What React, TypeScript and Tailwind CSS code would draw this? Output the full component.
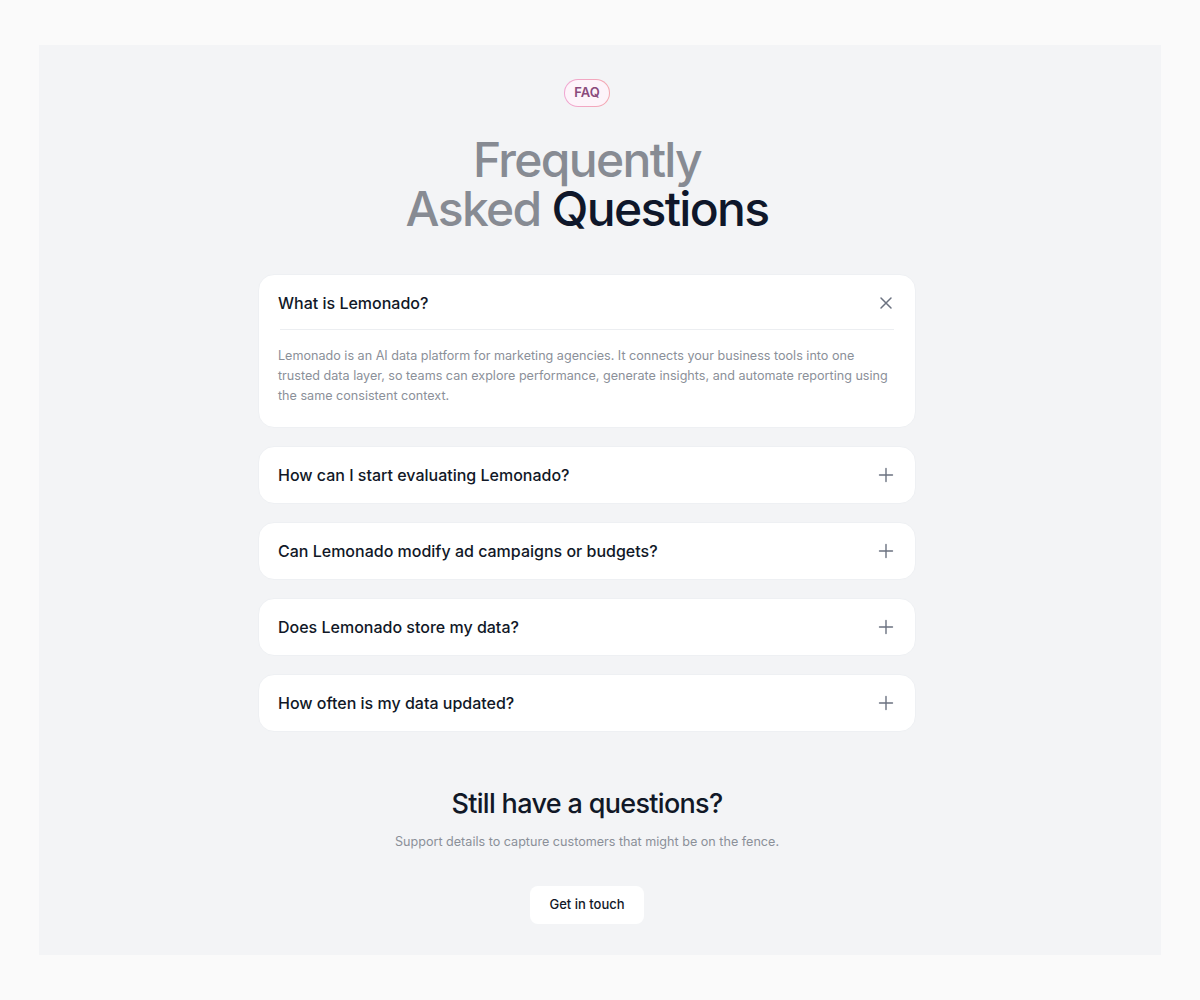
import React, { useState } from 'react';

interface FaqItem {
  question: string;
  answer: string;
}

const faqs: FaqItem[] = [
  {
    question: 'What is Lemonado?',
    answer:
      'Lemonado is an AI data platform for marketing agencies. It connects your business tools into one trusted data layer, so teams can explore performance, generate insights, and automate reporting using the same consistent context.',
  },
  {
    question: 'How can I start evaluating Lemonado?',
    answer: 'Sign up for a free trial and connect your first data source in a few minutes.',
  },
  {
    question: 'Can Lemonado modify ad campaigns or budgets?',
    answer: 'No. Lemonado has read-only access to your connected platforms.',
  },
  {
    question: 'Does Lemonado store my data?',
    answer: 'Your data is stored securely in an isolated workspace that only your team can access.',
  },
  {
    question: 'How often is my data updated?',
    answer: 'Data is synced automatically on a schedule you control.',
  },
];

const PlusIcon = () => (
  <svg width="16" height="16" viewBox="0 0 16 16" fill="none" stroke="#6b7280" strokeWidth="1.4" strokeLinecap="round">
    <path d="M8 1.5v13M1.5 8h13" />
  </svg>
);

const CloseIcon = () => (
  <svg width="16" height="16" viewBox="0 0 16 16" fill="none" stroke="#6b7280" strokeWidth="1.5" strokeLinecap="round">
    <path d="M3 3l10 10M13 3L3 13" />
  </svg>
);

export default function App() {
  const [open, setOpen] = useState<number | null>(0);

  return (
    <div className="min-h-screen bg-[#fafafa] px-[39px] pt-[45px] pb-[45px] font-['Inter',sans-serif]">
      <section className="bg-[#f3f4f6] flex flex-col items-center pr-[26px] pt-[34px] pb-[31px]">
        {/* Badge */}
        <div className="rounded-full p-px bg-gradient-to-r from-[#f0a6d2] to-[#f4a8b0]">
          <div className="rounded-full bg-[#fdf4fa] px-[9px] h-[26px] flex items-center text-[13px] font-semibold text-[#8a4a7c]">
            FAQ
          </div>
        </div>

        {/* Heading */}
        <h1 className="mt-[28px] flex flex-col items-center text-[48px] font-medium tracking-[-0.035em] text-[#878b93]">
          <span className="block leading-[50px]">Frequently</span>
          <span className="block leading-[48px]">
            Asked <span className="text-[#0f172a]">Questions</span>
          </span>
        </h1>

        {/* Accordion */}
        <div className="mt-[41px] w-[658px] flex flex-col gap-[18px]">
          {faqs.map((item, i) => {
            const isOpen = open === i;
            return (
              <div key={item.question} className="bg-white rounded-[16px] border border-[#eef0f3]">
                <button
                  onClick={() => setOpen(isOpen ? null : i)}
                  className="w-full flex items-center justify-between px-[19px] py-[16px] text-left"
                >
                  <span className="text-[16px] leading-[24px] font-medium text-[#111827]">{item.question}</span>
                  <span className="mr-[2px]">{isOpen ? <CloseIcon /> : <PlusIcon />}</span>
                </button>
                {isOpen && (
                  <div className="px-[19px] pb-[21px]">
                    <div className="mx-[2px] h-px bg-[#eceef1] -mt-[2px]" />
                    <p className="mt-[16px] text-[12.6px] leading-[20px] text-[#8b9099]">{item.answer}</p>
                  </div>
                )}
              </div>
            );
          })}
        </div>

        {/* Contact */}
        <h2 className="mt-[55px] text-[27px] leading-[34px] font-medium tracking-[-0.025em] text-[#111827]">
          Still have a questions?
        </h2>
        <p className="mt-[11px] text-[12.6px] leading-[20px] text-[#8b9099]">
          Support details to capture customers that might be on the fence.
        </p>
        <button className="mt-[34px] h-[38px] px-[19px] rounded-[8px] bg-white text-[13px] font-medium text-[#111827]">
          Get in touch
        </button>
      </section>
    </div>
  );
}
